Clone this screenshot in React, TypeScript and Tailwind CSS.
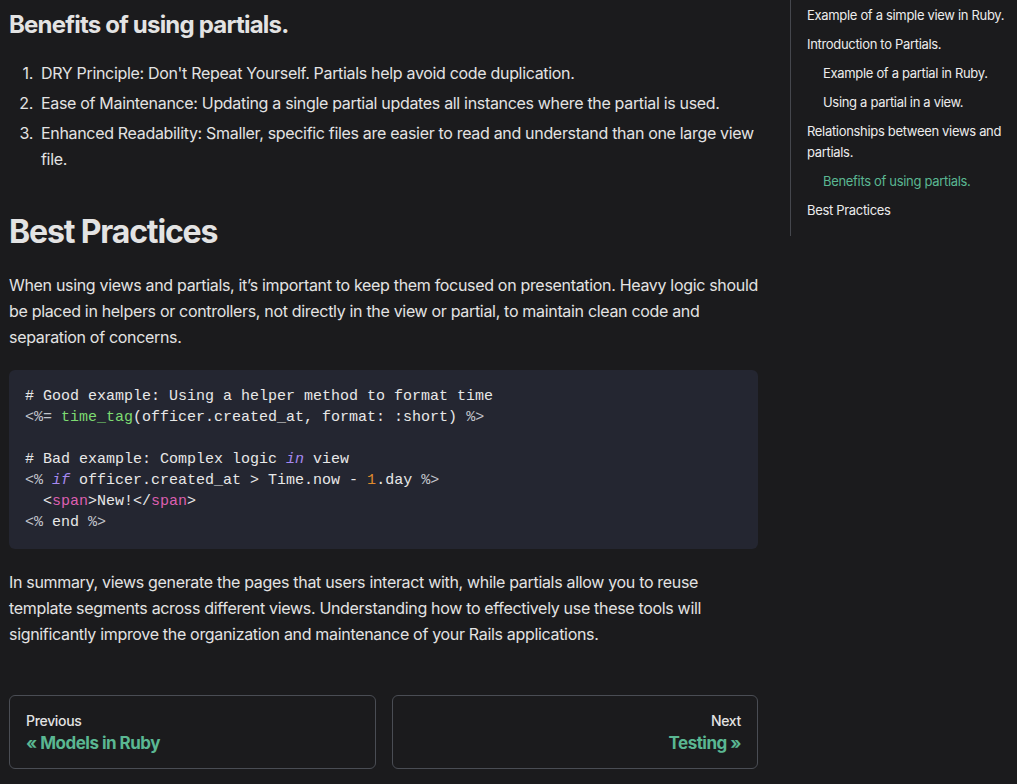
const sans = "font-['Inter','Liberation_Sans',sans-serif]";
const mono = "font-['DejaVu_Sans_Mono','Liberation_Mono',monospace]";

type TocItem = { label: string; nested?: boolean; active?: boolean };

const toc: TocItem[] = [
  { label: "Example of a simple view in Ruby." },
  { label: "Introduction to Partials." },
  { label: "Example of a partial in Ruby.", nested: true },
  { label: "Using a partial in a view.", nested: true },
  { label: "Relationships between views and partials." },
  { label: "Benefits of using partials.", nested: true, active: true },
  { label: "Best Practices" },
];

const benefits = [
  "DRY Principle: Don't Repeat Yourself. Partials help avoid code duplication.",
  "Ease of Maintenance: Updating a single partial updates all instances where the partial is used.",
  "Enhanced Readability: Smaller, specific files are easier to read and understand than one large view file.",
];

function CodeBlock() {
  const tag = "text-[#c2c5cc]";
  return (
    <pre className={`${mono} mb-5 rounded-md bg-[#242631] px-4 py-4 text-[15px] leading-[21px] tracking-normal text-[#e8e8e8]`}>
      <code>
        <div># Good example: Using a helper method to format time</div>
        <div>
          <span className={tag}>&lt;%=</span> <span className="text-[#7ddb72]">time_tag</span>(officer.created_at, format: :short){" "}
          <span className={tag}>%&gt;</span>
        </div>
        <div>&nbsp;</div>
        <div>
          # Bad example: Complex logic <span className="italic text-[#a689f0]">in</span> view
        </div>
        <div>
          <span className={tag}>&lt;%</span> <span className="italic text-[#a689f0]">if</span> officer.created_at &gt; Time.now -{" "}
          <span className="text-[#e08a2c]">1</span>.day <span className={tag}>%&gt;</span>
        </div>
        <div>
          {"  "}&lt;<span className="text-[#dc5fb0]">span</span>&gt;New!&lt;/<span className="text-[#dc5fb0]">span</span>&gt;
        </div>
        <div>
          <span className={tag}>&lt;%</span> end <span className={tag}>%&gt;</span>
        </div>
      </code>
    </pre>
  );
}

export default function App() {
  return (
    <div className={`${sans} flex min-h-screen bg-[#1b1b1d] tracking-[-0.02em] text-[#e3e3e3]`}>
      <main className="w-[790px] shrink-0 pl-[9px] pr-[32px] pt-[10px]">
        <h3 className="mb-5 text-[24px] font-bold leading-[30px] tracking-[-0.033em] text-[#e3e3e3]">
          Benefits of using partials.
        </h3>
        <ol className="mb-5 text-[16px] leading-[26px]">
          {benefits.map((b, i) => (
            <li key={b} className="mt-1 flex first:mt-0">
              <span className="w-[32px] shrink-0 pr-[8px] text-right">{i + 1}.</span>
              <span>{b}</span>
            </li>
          ))}
        </ol>

        <h2 className="mb-5 mt-10 text-[32px] font-bold leading-[40px] tracking-[-0.036em] text-[#e3e3e3]">
          Best Practices
        </h2>
        <p className="mb-5 text-[16px] leading-[26px]">
          When using views and partials, it’s important to keep them focused on presentation. Heavy logic should
          be placed in helpers or controllers, not directly in the view or partial, to maintain clean code and
          separation of concerns.
        </p>

        <CodeBlock />

        <p className="text-[16px] leading-[26px]">
          In summary, views generate the pages that users interact with, while partials allow you to reuse
          template segments across different views. Understanding how to effectively use these tools will
          significantly improve the organization and maintenance of your Rails applications.
        </p>

        <nav className="mt-12 grid grid-cols-2 gap-4">
          <a className="block rounded-md border border-[#4a4d54] px-4 pb-[15px] pt-4">
            <div className="mb-1 text-[14px] font-medium leading-[18px] text-[#e3e3e3]">Previous</div>
            <div className="text-[17px] font-bold leading-[19px] tracking-[-0.03em] text-[#5ab792]">« Models in Ruby</div>
          </a>
          <a className="block rounded-md border border-[#4a4d54] px-4 pb-[15px] pt-4 text-right">
            <div className="mb-1 text-[14px] font-medium leading-[18px] text-[#e3e3e3]">Next</div>
            <div className="text-[17px] font-bold leading-[19px] tracking-[-0.03em] text-[#5ab792]">Testing »</div>
          </a>
        </nav>
      </main>

      <aside className="w-[227px] shrink-0">
        <ul className="border-l border-[#45474d] pb-[15px] pl-4 pr-2 pt-[5px] text-[13px] leading-[21px]">
          {toc.map((t) => (
            <li
              key={t.label}
              className={`mt-2 first:mt-0 ${t.nested ? "pl-4" : ""} ${t.active ? "text-[#5ab792]" : "text-[#ececec]"}`}
            >
              {t.label}
            </li>
          ))}
        </ul>
      </aside>
    </div>
  );
}
